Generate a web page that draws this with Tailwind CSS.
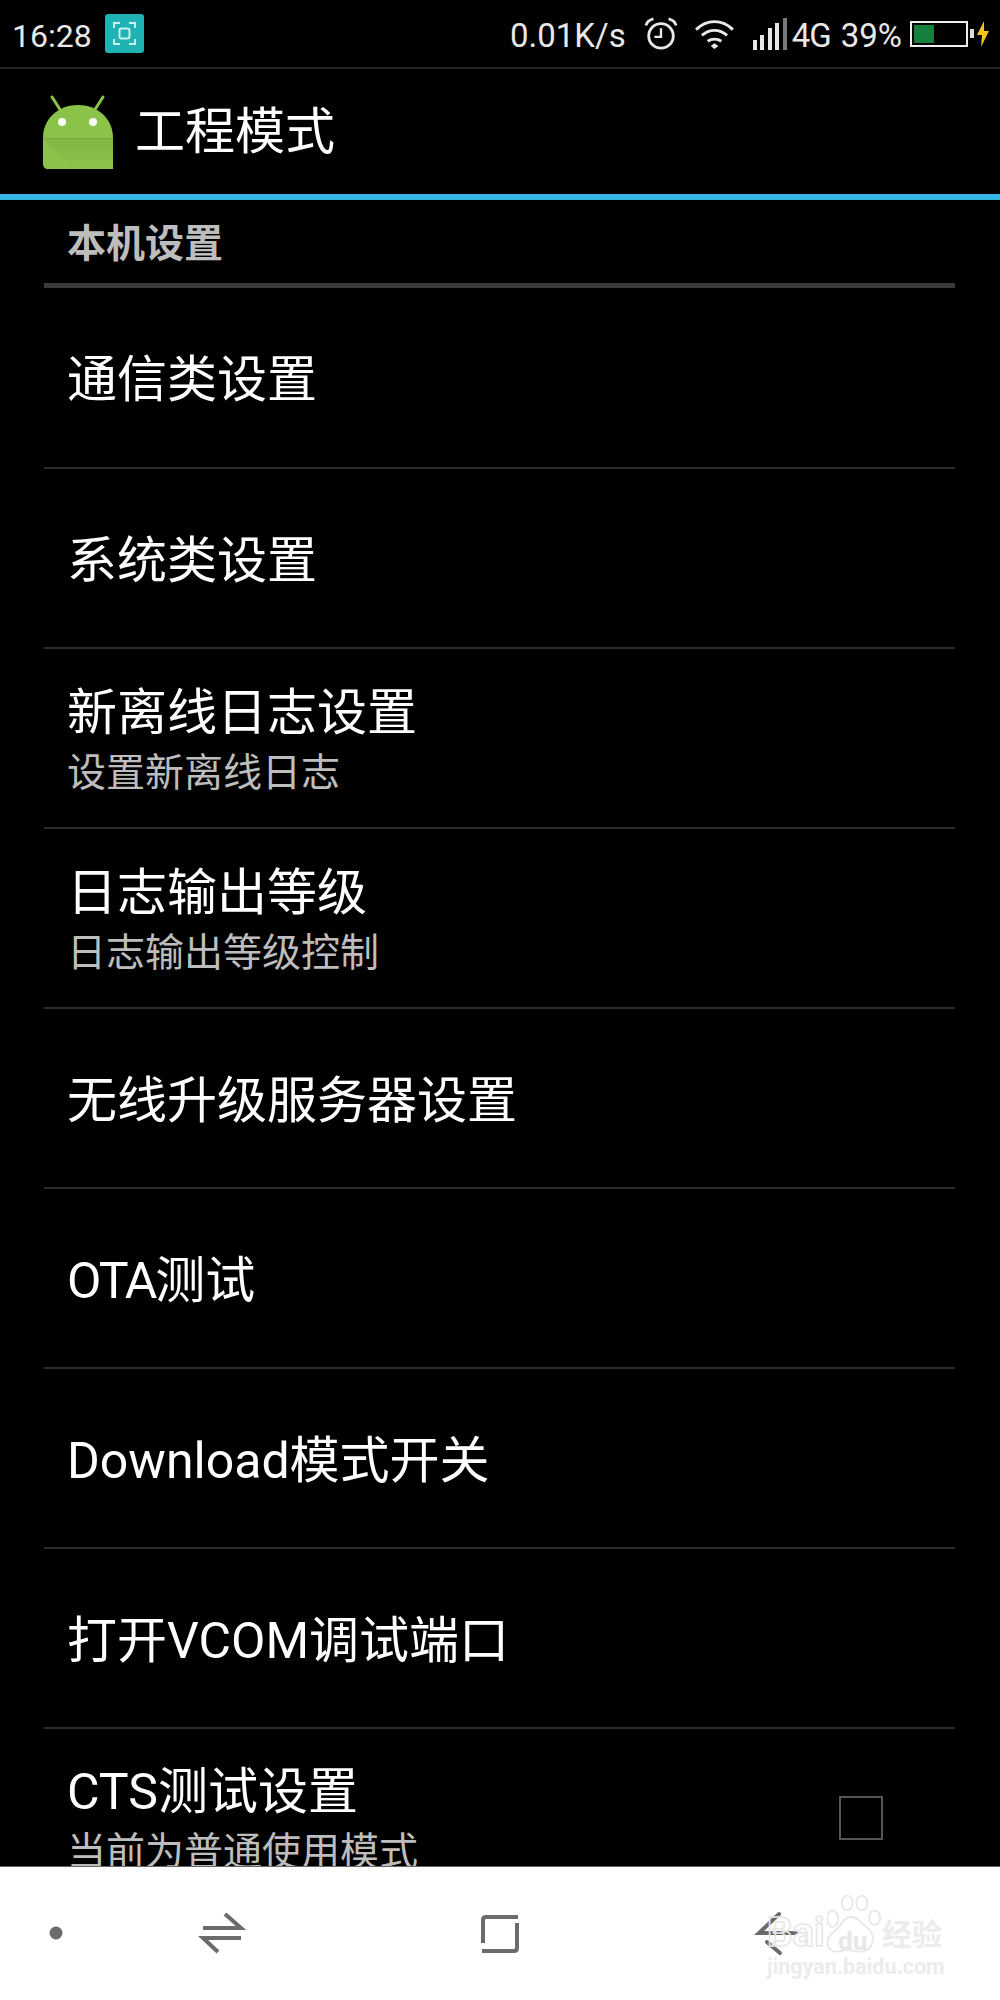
<!DOCTYPE html>
<html lang="zh-CN">

<head>
    <meta charset="UTF-8">
    <title>工程模式</title>
    <script src="https://cdn.jsdelivr.net/npm/@tailwindcss/browser@4"></script>
</head>

<body class="bg-black">
    <div class="relative flex flex-col h-[2000px] w-[1000px] overflow-hidden bg-black text-white font-['Roboto','Noto_Sans_CJK_SC',sans-serif]">
        <!-- Status bar -->
        <div class="flex items-center h-[69px] shrink-0 border-b-[2px] border-[#222] pl-[12px] pr-[11px] text-[33px] text-[#e8e8e8]">
            <span class="mt-[4px] text-[32px]">16:28</span>
            <svg class="ml-[13px] w-[39px] h-[39px]" viewBox="0 0 39 39" fill="none">
                <rect width="39" height="39" rx="3" fill="#1fb2b2" />
                <path d="M9 14V9h6M24 9h6v5M30 25v5h-6M15 30H9v-5" stroke="#cfeeee" stroke-width="2" />
                <rect x="14.500" y="14.500" width="10" height="10" rx="2" stroke="#cfeeee" stroke-width="2" />
            </svg>
            <span class="ml-auto mt-[4px]">0.01K/s</span>
            <!-- alarm -->
            <svg class="ml-[18px] w-[34px] h-[34px]" viewBox="0 0 36 36" fill="none" stroke="#e8e8e8">
                <circle cx="18" cy="20" r="13" stroke-width="3" />
                <path d="M18 12v9h-7" stroke-width="2.500" />
                <path d="M2 9c1-4 4-6 8-7M34 9c-1-4-4-6-8-7" stroke-width="3" />
            </svg>
            <!-- wifi -->
            <svg class="ml-[16px] w-[41px] h-[33px]" viewBox="0 0 42 34" fill="none" stroke="#e8e8e8" stroke-width="3">
                <path d="M2 13c11-11 27-11 38 0" />
                <path d="M8 19c8-7 18-7 26 0" />
                <path d="M14 25c4-3 10-3 14 0" />
                <path d="M17 30l4-3 4 3-4 3z" fill="#e8e8e8" stroke="none" />
            </svg>
            <!-- signal -->
            <div class="ml-[18px] flex items-end gap-[3.500px] h-[32px]">
                <div class="w-[4px] h-[10px] bg-[#e8e8e8]"></div>
                <div class="w-[4px] h-[15px] bg-[#e8e8e8]"></div>
                <div class="w-[4px] h-[22px] bg-[#e8e8e8]"></div>
                <div class="w-[4px] h-[27px] bg-[#e8e8e8]"></div>
                <div class="w-[4px] h-[32px] bg-[#777]"></div>
            </div>
            <span class="ml-[5px] mt-[4px] tracking-[-1px]">4G</span>
            <span class="ml-[10px] mt-[4px]">39%</span>
            <!-- battery -->
            <div class="ml-[8px] flex items-center">
                <div class="w-[58px] h-[26px] border-[2px] border-[#eee] p-[2px]">
                    <div class="w-[20px] h-full bg-[#14803c]"></div>
                </div>
                <div class="ml-[2px] w-[4px] h-[9px] bg-[#ddd]"></div>
                <svg class="ml-[3px] w-[12px] h-[26px]" viewBox="0 0 12 26">
                    <path d="M7 0L0 14h5l-1 12 8-16H7z" fill="#f5c518" />
                </svg>
            </div>
        </div>

        <!-- Action bar -->
        <div class="flex items-center h-[131px] shrink-0 border-b-[6px] border-[#33b5e5] pl-[41px]">
            <svg class="w-[74px] h-[76px]" viewBox="0 0 74 76">
                <defs>
                    <linearGradient id="fold" x1="0" y1="0" x2="0" y2="1">
                        <stop offset="0" stop-color="#82b545" />
                        <stop offset="1" stop-color="#8bc34a" />
                    </linearGradient>
                </defs>
                <path d="M11 3l9 14M62 3l-9 14" stroke="#8bc34a" stroke-width="3" stroke-linecap="round" />
                <path d="M2 44C2 24 18 11 37 11s35 13 35 33v26c0 3-2 5-5 5H7c-3 0-5-2-5-5z" fill="#8bc34a" />
                <path d="M2 45h70v30H33z" fill="url(#fold)" />
                <path d="M2 44h70v1H2z" fill="#7aa83f" />
                <circle cx="21" cy="28" r="4" fill="#fff" />
                <circle cx="52" cy="28" r="4" fill="#fff" />
            </svg>
            <span class="ml-[20px] text-[50px] leading-none">工程模式</span>
        </div>

        <!-- Settings list -->
        <div class="flex-1 overflow-hidden pl-[44px] pr-[45px]">
            <div class="flex items-center h-[88px] border-b-[5px] border-[#3a3a3a] pl-[23px] pt-[5px] text-[39px] font-bold text-[#bdbdbd]">本机设置</div>

            <div class="flex items-center h-[181px] border-b-[2px] border-[#2a2a2a] pl-[23px] pt-[6px] text-[50px]">通信类设置</div>
            <div class="flex items-center h-[180px] border-b-[2px] border-[#2a2a2a] pl-[23px] pt-[6px] text-[50px]">系统类设置</div>

            <div class="flex flex-col justify-center h-[180px] border-b-[2px] border-[#2a2a2a] pl-[23px] pt-[2px]">
                <div class="text-[50px] leading-[60px]">新离线日志设置</div>
                <div class="mt-[7px] text-[39px] leading-[46px] text-[#bdbdbd]">设置新离线日志</div>
            </div>
            <div class="flex flex-col justify-center h-[180px] border-b-[2px] border-[#2a2a2a] pl-[23px] pt-[2px]">
                <div class="text-[50px] leading-[60px]">日志输出等级</div>
                <div class="mt-[7px] text-[39px] leading-[46px] text-[#bdbdbd]">日志输出等级控制</div>
            </div>

            <div class="flex items-center h-[180px] border-b-[2px] border-[#2a2a2a] pl-[23px] pt-[6px] text-[50px]">无线升级服务器设置</div>
            <div class="flex items-center h-[180px] border-b-[2px] border-[#2a2a2a] pl-[23px] pt-[6px] text-[50px]">
                <span><span class="tracking-[-2px]">OTA</span>测试</span>
            </div>
            <div class="flex items-center h-[180px] border-b-[2px] border-[#2a2a2a] pl-[23px] pt-[6px] text-[50px]">Download模式开关</div>
            <div class="flex items-center h-[180px] border-b-[2px] border-[#2a2a2a] pl-[23px] pt-[6px] text-[50px]">打开VCOM调试端口</div>

            <div class="flex items-center h-[180px] border-b-[2px] border-[#2a2a2a] pl-[23px]">
                <div class="flex-1">
                    <div class="text-[50px] leading-[60px]">CTS测试设置</div>
                    <div class="mt-[7px] text-[39px] leading-[46px] text-[#bdbdbd]">当前为普通使用模式</div>
                </div>
                <div class="w-[44px] h-[44px] mr-[72px] border-[2px] border-[#555]"></div>
            </div>
        </div>

        <!-- Navigation bar -->
        <div class="h-[134px] shrink-0 border-t-[1px] border-[#666] bg-white">
            <svg class="w-[1000px] h-[133px]" viewBox="0 1867 1000 133" fill="none" stroke="#6b6b6b" stroke-width="4">
                <circle cx="56" cy="1933" r="6.500" fill="#6b6b6b" stroke="none" />
                <path d="M203 1928h38l-16-14" />
                <path d="M241 1938h-38l15 14" />
                <path d="M518 1917h-32q-3 0-3 3v23" />
                <path d="M482 1951h32q3 0 3-3v-25" />
                <path d="M779 1914l-20 19h37" stroke-linecap="round" />
                <path d="M767 1942l13 11" stroke-linecap="round" />
            </svg>
        </div>

        <!-- Baidu watermark -->
        <div class="absolute left-[767px] top-[1893px] w-[180px] h-[90px]">
            <svg class="absolute left-[60px] top-0 w-[55px] h-[64px]" viewBox="0 0 60 66" fill="none" stroke="#e8e8e8" stroke-width="2">
                <ellipse cx="6" cy="26" rx="6" ry="9" />
                <ellipse cx="22" cy="9" rx="6" ry="8" />
                <ellipse cx="38" cy="9" rx="6" ry="8" />
                <ellipse cx="52" cy="25" rx="6" ry="8" />
                <path d="M26 24c8 0 12 8 20 14 8 8 4 24-10 24-6 0-10-2-14-2s-6 2-12 2C-2 62-2 46 8 40c8-6 10-16 18-16z" />
            </svg>
            <span class="absolute left-0 top-[20px] text-[40px] leading-none font-bold text-transparent [-webkit-text-stroke:1.500px_#e6e6e6]">Bai</span>
            <span class="absolute left-[71px] top-[35px] text-[26px] leading-none font-bold text-[#e8e8e8]">du</span>
            <span class="absolute left-[115px] top-[27px] text-[30px] leading-none font-bold text-[#ececec]">经验</span>
            <span class="absolute left-0 top-[63px] text-[21.500px] leading-none font-bold text-[#ececec] whitespace-nowrap">jingyan.baidu.com</span>
        </div>
    </div>
</body>

</html>
